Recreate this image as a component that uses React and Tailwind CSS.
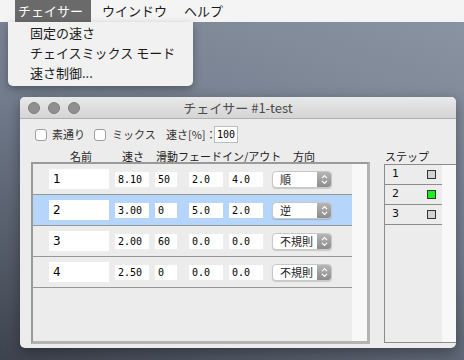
import React from "react";

const rows = [
  { name: "1", speed: "8.10", slide: "50", fin: "2.0", fout: "4.0", dir: "順" },
  { name: "2", speed: "3.00", slide: "0", fin: "5.0", fout: "2.0", dir: "逆", sel: true },
  { name: "3", speed: "2.00", slide: "60", fin: "0.0", fout: "0.0", dir: "不規則" },
  { name: "4", speed: "2.50", slide: "0", fin: "0.0", fout: "0.0", dir: "不規則" },
];

function Chevrons() {
  return (
    <svg width="7" height="11" viewBox="0 0 7 11">
      <path d="M1 4.2 L3.5 1.7 L6 4.2" fill="none" stroke="white" strokeWidth="1.2" />
      <path d="M1 6.8 L3.5 9.3 L6 6.8" fill="none" stroke="white" strokeWidth="1.2" />
    </svg>
  );
}

function Select({ value }) {
  return (
    <div className="ml-[9px] flex h-[17px] w-[60px] overflow-hidden rounded-[4px] border border-[#c8c8c8] bg-white shadow-[0_1px_1px_rgba(0,0,0,0.15)]">
      <div className="flex-1 pl-[7px] text-[11px] leading-[15px] text-[#222]">{value}</div>
      <div className="flex w-[14px] items-center justify-center bg-linear-to-b from-[#b6b6b6] to-[#8c8c8c]">
        <Chevrons />
      </div>
    </div>
  );
}

function Num({ value, w, ml }) {
  return (
    <div
      className={`${w} ${ml} h-[15px] bg-white pl-[3px] font-['DejaVu_Sans_Mono',monospace] text-[10px] leading-[15px] text-black`}
    >
      {value}
    </div>
  );
}

function Row({ r }) {
  return (
    <div
      className={`flex h-[31px] items-center border-b border-[#979797] pl-[16px] ${
        r.sel ? "bg-[#b5d5fb]" : ""
      }`}
    >
      <div className="h-[20px] w-[60px] bg-white pl-[4px] font-['DejaVu_Sans',sans-serif] text-[12px] leading-[20px] text-black">
        {r.name}
      </div>
      <Num value={r.speed} w="w-[34px]" ml="ml-[6px]" />
      <Num value={r.slide} w="w-[22px]" ml="ml-[6px]" />
      <Num value={r.fin} w="w-[34px]" ml="ml-[12px]" />
      <Num value={r.fout} w="w-[34px]" ml="ml-[6px]" />
      <Select value={r.dir} />
    </div>
  );
}

function Checkbox() {
  return <div className="h-[12px] w-[12px] shrink-0 rounded-[3px] border border-[#9d9d9d] bg-white" />;
}

export default function App() {
  return (
    <div className="relative h-[360px] w-[464px] overflow-hidden bg-[linear-gradient(200deg,#8c95a3_0%,#727c8c_50%,#3d434e_100%)] font-['Noto_Sans_CJK_JP','Noto_Sans',sans-serif]">
      {/* Menu bar */}
      <div className="flex h-[22px] items-stretch bg-[#f4f4f4] text-[13px] leading-[22px] text-[#1b1b1b]">
        <div className="ml-[15px] w-[76px] bg-[#6a6a6a] pl-[3px] text-white">チェイサー</div>
        <div className="ml-[11px] w-[82px]">ウインドウ</div>
        <div>ヘルプ</div>
      </div>

      {/* Dropdown menu */}
      <div className="absolute left-[8px] top-[22px] z-10 h-[64px] w-[185px] rounded-b-[5px] bg-[#f1f1f1] pt-[1px] text-[13px] leading-[20px] text-[#1b1b1b] shadow-[0_3px_8px_rgba(0,0,0,0.3)]">
        <div className="pl-[22px]">固定の速さ</div>
        <div className="pl-[22px]">チェイスミックス モード</div>
        <div className="pl-[22px]">速さ制御...</div>
      </div>

      {/* Window */}
      <div className="absolute left-[20px] top-[97px] flex h-[251px] w-[436px] flex-col overflow-hidden rounded-[5px] bg-[#ececec] shadow-[0_4px_14px_rgba(0,0,0,0.35)]">
        {/* Title bar */}
        <div className="relative flex h-[22px] shrink-0 items-center gap-[8px] border-b border-[#b1b1b1] bg-linear-to-b from-[#e9e9e9] to-[#d4d4d4] pl-[8px]">
          <div className="h-[12px] w-[12px] rounded-full border border-[#7e7e7e] bg-[#8f8f8f]" />
          <div className="h-[12px] w-[12px] rounded-full border border-[#7e7e7e] bg-[#8f8f8f]" />
          <div className="h-[12px] w-[12px] rounded-full border border-[#7e7e7e] bg-[#8f8f8f]" />
          <div className="absolute inset-0 text-center text-[13px] leading-[21px] text-[#4b4b4b]">チェイサー #1-test</div>
        </div>

        {/* Body */}
        <div className="flex flex-1 flex-col">
          {/* checkbox row */}
          <div className="mt-[7px] flex h-[17px] items-center whitespace-nowrap pl-[15px] text-[11px] text-[#333]">
            <div className="flex w-[59px] shrink-0 items-center">
              <Checkbox />
              <span className="ml-[5px]">素通り</span>
            </div>
            <div className="flex w-[72px] shrink-0 items-center">
              <Checkbox />
              <span className="ml-[6px]">ミックス</span>
            </div>
            <span className="w-[48px] shrink-0">速さ[%]：</span>
            <div className="h-[17px] w-[24px] shrink-0 border border-[#bcbcbc] bg-white pl-[2px] font-['DejaVu_Sans_Mono',monospace] text-[10px] leading-[15px] text-black">
              100
            </div>
          </div>

          <div className="mt-[7px] flex">
            {/* left column */}
            <div className="ml-[11px] flex w-[339px] shrink-0 flex-col">
              <div className="flex h-[12px] whitespace-nowrap text-[11px] leading-[12px] text-[#222]">
                <span className="ml-[39px] w-[52px] shrink-0">名前</span>
                <span className="w-[34px] shrink-0">速さ</span>
                <span className="w-[137px] shrink-0">滑動フェードイン/アウト</span>
                <span>方向</span>
              </div>
              <div className="flex h-[182px] border-b-[3px] border-l-2 border-r-[3px] border-t-2 border-b-[#b3b3b3] border-l-[#9a9a9a] border-r-[#b3b3b3] border-t-[#9a9a9a]">
                <div className="w-[319px] shrink-0">
                  {rows.map((r) => (
                    <Row key={r.name} r={r} />
                  ))}
                </div>
                <div className="flex-1 bg-[#f8f8f8]" />
              </div>
            </div>

            {/* right column */}
            <div className="ml-[14px] flex w-[90px] shrink-0 flex-col">
              <div className="h-[12px] whitespace-nowrap pl-[1px] text-[11px] leading-[12px] text-[#222]">ステップ</div>
              <div className="mt-[2px] flex h-[179px] border border-[#8c8c8c]">
                <div className="w-[57px] shrink-0 bg-[#ececec]">
                  {[1, 2, 3].map((n) => (
                    <div
                      key={n}
                      className="flex h-[20px] items-center justify-between border-b border-[#8c8c8c] pl-[7px] pr-[6px] font-['DejaVu_Sans',sans-serif] text-[11px] text-[#111]"
                    >
                      <span>{n}</span>
                      <div
                        className={`h-[9px] w-[9px] border border-[#333] ${
                          n === 2 ? "bg-[#19f019]" : "bg-[#d2d2d2]"
                        }`}
                      />
                    </div>
                  ))}
                </div>
                <div className="flex-1 bg-[#f8f8f8]" />
              </div>
            </div>
          </div>
        </div>
      </div>
    </div>
  );
}
